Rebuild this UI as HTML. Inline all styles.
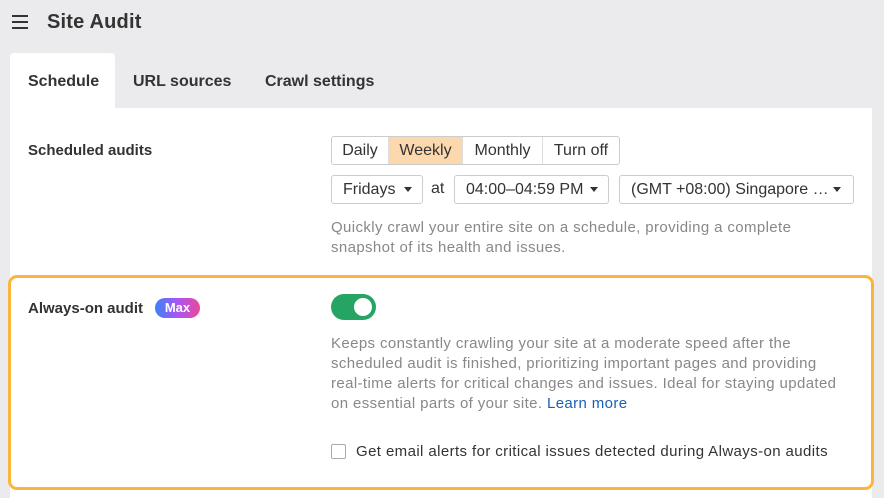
<!DOCTYPE html>
<html><head><style>
*{box-sizing:border-box;margin:0;padding:0}
body{width:884px;height:498px;background:#ebebed;font-family:"Liberation Sans",sans-serif;color:#333;position:relative;overflow:hidden}
.abs{position:absolute}
.title{left:47px;top:11px;font-size:20px;font-weight:bold;color:#333;letter-spacing:0.2px}
.ham{left:12px;top:15px;width:16px}
.ham div{height:2px;background:#333;margin-bottom:4px}
.panel{left:10px;top:108px;width:862px;height:390px;background:#fff}
.tab{top:53px;left:10px;width:105px;height:56px;background:#fff;border-radius:4px 4px 0 0}
.tabt{font-size:16px;font-weight:bold;top:73px}
.lbl{font-size:15px;font-weight:bold;color:#333}
.seg{left:331px;top:136px;height:29px;display:flex;border:1px solid #ccc;border-radius:3px;overflow:hidden;font-size:16px}
.seg div{text-align:center;line-height:27px;border-right:1px solid #ddd}
.seg div:last-child{border-right:none}
.sel{height:29px;border:1px solid #ccc;border-radius:3px;font-size:16px;line-height:27px;padding-left:11px;top:175px}
.tri{position:absolute;right:10px;top:11px;width:0;height:0;border-left:4.5px solid transparent;border-right:4.5px solid transparent;border-top:5px solid #333}
.desc{font-size:15px;color:#888;line-height:20px;white-space:nowrap;letter-spacing:0.38px}
.box{left:8px;top:275px;width:866px;height:215px;border:3px solid #fbb63a;border-radius:9px}
</style></head><body>
<div class="abs ham"><div></div><div></div><div></div></div>
<div class="abs title">Site Audit</div>
<div class="abs panel"></div>
<div class="abs tab"></div>
<div class="abs tabt" style="left:28px">Schedule</div>
<div class="abs tabt" style="left:133px">URL sources</div>
<div class="abs tabt" style="left:265px">Crawl settings</div>
<div class="abs lbl" style="left:28px;top:142px">Scheduled audits</div>
<div class="abs seg"><div style="width:57px">Daily</div><div style="width:74px;background:#fdd8ae">Weekly</div><div style="width:80px">Monthly</div><div style="width:76px">Turn off</div></div>
<div class="abs sel" style="left:331px;width:92px">Fridays<span class="tri"></span></div>
<div class="abs" style="left:431px;top:180px;font-size:16px">at</div>
<div class="abs sel" style="left:454px;width:155px">04:00–04:59 PM<span class="tri"></span></div>
<div class="abs sel" style="left:619px;width:235px">(GMT +08:00) Singapore …<span class="tri" style="right:12px"></span></div>
<div class="abs desc" style="left:331px;top:218px">Quickly crawl your entire site on a schedule, providing a complete<br>snapshot of its health and issues.</div>
<div class="abs box"></div>
<div class="abs lbl" style="left:28px;top:300px">Always-on audit</div>
<div class="abs" style="left:155px;top:298px;width:45px;height:20px;border-radius:10px;background:linear-gradient(90deg,#3b82f6,#a855f7,#ec4899);color:#fff;font-size:13px;font-weight:bold;text-align:center;line-height:20px">Max</div>
<div class="abs" style="left:331px;top:294px;width:45px;height:26px;border-radius:13px;background:#25a464"><div class="abs" style="right:4px;top:4px;width:18px;height:18px;border-radius:50%;background:#fff"></div></div>
<div class="abs desc" style="left:331px;top:334px">Keeps constantly crawling your site at a moderate speed after the<br>scheduled audit is finished, prioritizing important pages and providing<br>real-time alerts for critical changes and issues. Ideal for staying updated<br>on essential parts of your site. <span style="color:#1a5fb4">Learn more</span></div>
<div class="abs" style="left:331px;top:444px;width:15px;height:15px;border:1px solid #aaa;border-radius:2px"></div>
<div class="abs" style="left:356px;top:443px;font-size:15px;color:#333;letter-spacing:0.4px">Get email alerts for critical issues detected during Always-on audits</div>
</body></html>
